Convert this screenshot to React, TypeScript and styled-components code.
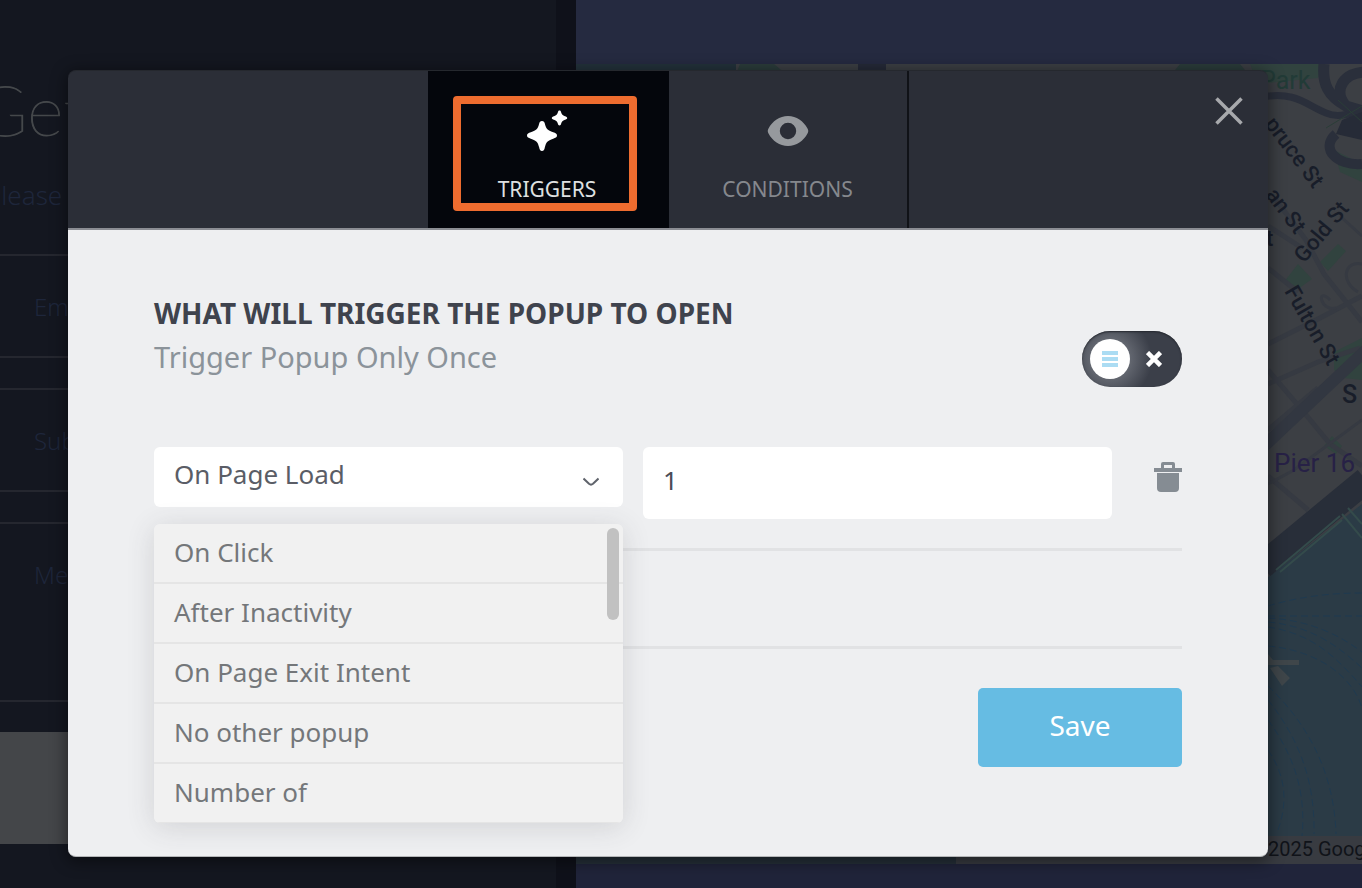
import React, { useState } from "react";
import styled, { createGlobalStyle } from "styled-components";

const uiFont = `"Noto Sans", "Open Sans", sans-serif`;

const GlobalStyle = createGlobalStyle`
  *, *::before, *::after { box-sizing: border-box; }
  body { margin: 0; background: #141720; font-family: ${uiFont}; }
  button, input, select { font-family: inherit; }
`;

const Stage = styled.div`
  position: relative;
  min-height: 100vh;
  overflow: hidden;
  display: grid;
`;

const Page = styled.div`
  grid-area: 1 / 1;
  display: grid;
  grid-template-columns: 556px 1fr;
  min-width: 0;
`;

const ContactForm = styled.form`
  padding-top: 67px;
  background: #141720;
  overflow: hidden;
`;

const FormTitle = styled.h1`
  margin: 0 0 24px -24px;
  font: 100 70px/84px "Lato", sans-serif;
  color: #45484b;
  -webkit-text-stroke: 1px #45484b;
  white-space: nowrap;
`;

const FormIntro = styled.p`
  margin: 0 0 39px -14px;
  font-size: 26px;
  line-height: 40px;
  font-weight: 300;
  color: #1e263b;
`;

const FormField = styled.input<{ $tall?: boolean }>`
  display: block;
  width: 100%;
  height: ${(p) => (p.$tall ? 180 : 104)}px;
  margin-bottom: 30px;
  padding: 0 34px ${(p) => (p.$tall ? 76 : 0)}px;
  border: solid #25272f;
  border-width: 2px 0;
  background: transparent;
  font-size: 24px;
  font-weight: 300;
  &::placeholder { color: #1e263b; opacity: 1; }
`;

const FormSubmit = styled.button`
  display: block;
  width: 100%;
  height: 112px;
  border: 0;
  background: #444649;
`;

const MapPanel = styled.section`
  border-left: 20px solid #0f111a;
  padding: 64px 0 24px;
  background: linear-gradient(#252a40 0 50%, #20243a 50%);
  min-width: 0;
`;

const MapDrawing = styled.svg`
  display: block;
  width: 100%;
  height: 800px;
`;

const Overlay = styled.div`
  grid-area: 1 / 1;
  position: relative;
  padding: 70px 94px 29px 68px;
  min-width: 0;
`;

const Dialog = styled.div`
  border-radius: 8px;
  box-shadow: 0 3px 16px 2px rgba(0, 0, 0, 0.45);
`;

const DialogHeader = styled.header`
  display: grid;
  grid-template-columns: 1fr 241px 240px 1fr;
  height: 160px;
  border-top: 1px solid #25282e;
  border-bottom: 2px solid #8b8d93;
  border-radius: 8px 8px 0 0;
  background: #2b2e37;
`;

const Tab = styled.button<{ $active?: boolean }>`
  position: relative;
  grid-column: ${(p) => (p.$active ? 2 : 3)};
  display: flex;
  flex-direction: column;
  align-items: center;
  gap: 23px;
  padding: 39px 0 0;
  border: 0;
  border-right: 2px solid ${(p) => (p.$active ? "#04060c" : "#101217")};
  background: ${(p) => (p.$active ? "#04060c" : "transparent")};
  color: ${(p) => (p.$active ? "#dfe0e1" : "#85888d")};
  font-size: 21px;
  line-height: 28px;
  svg { display: block; }
`;

const Highlight = styled.span`
  position: absolute;
  inset: 25px 30px 17px 25px;
  border: 8px solid #ee6c2f;
  border-radius: 4px;
  pointer-events: none;
`;

const HeaderEnd = styled.div`
  grid-column: 4;
  display: flex;
  justify-content: flex-end;
  align-items: flex-start;
  padding: 25px 24px 0 0;
`;

const IconButton = styled.button`
  display: grid;
  place-items: center;
  padding: 0;
  border: 0;
  background: transparent;
`;

const DialogBody = styled.div`
  padding: 65px 86px 89px;
  border-bottom: 1px solid #b4b6b8;
  border-radius: 0 0 8px 8px;
  background: #eeeff1;
`;

const Title = styled.h2`
  margin: 0;
  font-size: 28px;
  line-height: 36px;
  font-weight: 700;
  color: #3f434d;
`;

const OnceRow = styled.label`
  display: flex;
  justify-content: space-between;
  align-items: center;
  height: 56px;
  margin-bottom: 60px;
  font-size: 29px;
  line-height: 40px;
  color: #8b939a;
`;

const OnceText = styled.span`
  padding-bottom: 4px;
`;

const Switch = styled.span`
  position: relative;
  display: flex;
  align-items: center;
  justify-content: space-between;
  width: 100px;
  height: 56px;
  padding: 0 20px 0 8px;
  border-radius: 28px;
  background: radial-gradient(circle at 28px 28px, #666a73 0 18px, #3b3f49 42px);
  box-shadow: inset 0 1px 2px #24272e;
`;

const SwitchInput = styled.input`
  position: absolute;
  inset: 0;
  width: 100%;
  height: 100%;
  margin: 0;
  opacity: 0;
`;

const Knob = styled.span`
  display: flex;
  flex-direction: column;
  align-items: center;
  justify-content: center;
  gap: 2px;
  width: 40px;
  height: 40px;
  border-radius: 50%;
  background: #fff;
`;

const KnobLine = styled.i`
  width: 16px;
  height: 4px;
  background: #abdcf3;
`;

const TriggerRow = styled.div`
  display: grid;
  grid-template-columns: 1fr 1fr 50px;
  column-gap: 20px;
  align-items: start;
  padding-bottom: 29px;
  border-bottom: 3px solid #e1e2e4;
`;

const SelectBox = styled.div`
  position: relative;
  svg {
    position: absolute;
    right: 24px;
    top: 30px;
    pointer-events: none;
  }
`;

const Select = styled.select`
  display: block;
  width: 100%;
  height: 60px;
  padding: 0 48px 6px 20px;
  border: 0;
  border-radius: 6px;
  appearance: none;
  background: #fff;
  color: #5a5d66;
  font-size: 26px;
`;

const Options = styled.ul`
  position: absolute;
  z-index: 1;
  top: 77px;
  left: 0;
  right: 0;
  height: 299px;
  margin: 0;
  padding: 0;
  overflow: hidden;
  list-style: none;
  border-radius: 6px;
  background: #f1f1f1;
`;

const OptionsShadow = styled.div`
  position: absolute;
  top: 77px;
  left: 0;
  right: 0;
  height: 299px;
  border-radius: 6px;
  box-shadow: 0 4px 28px rgba(60, 65, 70, 0.16);
`;

const Option = styled.li`
  height: 60px;
  padding: 0 20px;
  border-bottom: 2px solid #e5e5e5;
  font-size: 26px;
  line-height: 56px;
  color: #74777a;
`;

const Thumb = styled.span`
  position: absolute;
  top: 4px;
  right: 4px;
  width: 12px;
  height: 92px;
  border-radius: 6px;
  background: #c1c1c1;
`;

const ValueInput = styled.input`
  display: block;
  width: 100%;
  min-width: 0;
  height: 72px;
  padding: 0 20px 6px;
  border: 0;
  border-radius: 6px;
  background: #fff;
  color: #4a4d57;
  font-size: 26px;
`;

const DeleteButton = styled(IconButton)`
  justify-self: end;
  margin-top: 15px;
`;

const Footer = styled.footer`
  display: flex;
  justify-content: flex-end;
  margin-top: 95px;
  padding-top: 39px;
  border-top: 3px solid #e1e2e4;
`;

const SaveButton = styled.button`
  width: 204px;
  height: 79px;
  padding: 0 0 6px;
  border: 0;
  border-radius: 5px;
  background: #66bce3;
  color: #fff;
  font-size: 28px;
`;

function StreetMap() {
  return (
    <MapDrawing viewBox="576 64 786 800" preserveAspectRatio="xMaxYMin slice" role="img" aria-label="Map">
      <rect x="576" y="64" width="786" height="800" fill="#3c3f44" />
      <path d="M576 64h160v20H576z" fill="#23323b" />
      <path d="M740 64h34l12 10h-50zM1180 64h60l10 12h-80z" fill="#2b3c3b" />
      <path d="M858 64h28v8h-28z" fill="#252a38" />
      <path d="M576 852h380v12H576z" fill="#253039" />
      <g fill="#31433f">
        <path d="M1250 64h72l-4 14-60 6zM1284 282l14-18 14 15-14 10zM1320 262l18-18 8 7-18 20zM1334 352l28-14v42l-18-2-10-8zM1324 446l8-10 10 10-6 8zM1334 150l28 14v18l-22-10z" />
      </g>
      <g fill="none" stroke="#363a42" strokeWidth="5">
        <path d="M1268 226l34 22M1268 344l52-26 42-22M1268 384l50-22 42-14M1268 370l34 40 28 34 32 22M1276 200l30 40 18 34 38 48M1268 476l40 34M1268 430l50-42M1268 268l30 24" />
        <path d="M1268 484l26-14 68-50M1340 216l22 20M1330 300c-14-14-10 12 6 8M1362 264c-18-4-22 18-4 28" strokeWidth="3" />
      </g>
      <path d="M1262 448l70-66 34-32" stroke="#323741" strokeWidth="12" fill="none" />
      <g fill="none" stroke="#2a2f3b">
        <path d="M1262 97c34-6 44 8 64 16 14 6 26 0 40-6" strokeWidth="7" />
        <path d="M1324 64c-2 20 4 32 22 42l20 6M1346 106c-14-16-2-34 20-34" strokeWidth="11" />
        <path d="M1336 134c-16 14 0 32 26 30" strokeWidth="10" />
      </g>
      <path d="M1342 120l20-8v28l-26-6z" fill="#262b37" />
      <path d="M1326 128l36-22M1338 100l24 22" stroke="#2b3e38" fill="none" />
      <path d="M1262 582l100-78v360h-100z" fill="#2b3b46" />
      <path d="M1262 566l104-86" stroke="#282e39" strokeWidth="26" fill="none" />
      <path d="M1276 570l64-54M1280 572l62-52M1342 514l20 24M1348 508l14 16" stroke="#344b4b" strokeWidth="2" fill="none" />
      <path d="M1268 671v-6h31v-5h-26l-5-6zM1270 668l12 18 8-8-12-12" fill="#3f464a" />
      <g fill="none" stroke="#1f3a50" strokeDasharray="7 4" strokeWidth="1">
        <path d="M1268 606c30-9 60-13 94-13M1268 616h94M1268 618c40 2 70 16 94 34M1268 622c45 4 72 26 94 46M1268 627c38 6 62 22 94 60M1268 646c46 4 84 28 94 62M1268 686c36 34 66 82 68 148M1268 700c32 40 47 82 46 134M1268 720c28 38 38 76 34 116M1268 750c18 26 20 52 10 80" />
      </g>
      <g fill="#181d29" fontFamily="Roboto, sans-serif" fontSize="22" fontWeight="500">
        <text x="1260" y="89" fontSize="25" fontWeight="400" fill="#223b37">Park</text>
        <text transform="translate(1264 124) rotate(53)">pruce St</text>
        <text transform="translate(1265 195) rotate(53)">an St</text>
        <text transform="translate(1304 264) rotate(-50)">Gold St</text>
        <text transform="translate(1284 291) rotate(60)">Fulton St</text>
        <text x="1266" y="246">t</text>
        <text x="1342" y="403" fontSize="25">S</text>
        <text x="1274" y="472" fontSize="26" fontWeight="400" fill="#272146">Pier 16</text>
      </g>
      <path d="M956 836h406v28H956z" fill="#383b41" />
      <text x="1268" y="856" fill="#101319" fontFamily="Roboto, sans-serif" fontSize="20">2025 Google</text>
    </MapDrawing>
  );
}

const SparkleIcon = () => (
  <svg width="42" height="42" viewBox="0 0 42 42" fill="#fff" aria-hidden="true">
    <path d="M16 11c1.800 0 2.400 1 2.800 2.500 1.500 5.600 2.600 6.800 8.400 8.800 2.300.8 3.800 1.400 3.800 3.200s-1.500 2.400-3.800 3.200c-5.800 2-6.900 3.200-8.400 8.800C18.400 39.500 17.800 41 16 41s-2.400-1.500-2.800-3.500c-1.500-5.600-2.600-6.800-8.400-8.800C2.500 27.900 1 27.300 1 25.500s1.500-2.400 3.800-3.200c5.800-2 6.900-3.200 8.400-8.800.4-1.500 1-2.500 2.800-2.500z" />
    <path d="M33.500.500c1 0 1.300.7 1.600 1.700.8 2.500 1.400 3.100 3.900 4 1.300.5 2.200.8 2.200 1.800s-.9 1.300-2.200 1.800c-2.500.9-3.100 1.500-3.900 4-.3 1-.6 1.700-1.600 1.700s-1.300-.7-1.600-1.700c-.8-2.500-1.400-3.100-3.900-4-1.300-.5-2.200-.8-2.200-1.800s.9-1.300 2.200-1.800c2.500-.9 3.100-1.500 3.900-4 .3-1 .6-1.700 1.600-1.700z" />
  </svg>
);

const EyeIcon = () => (
  <svg width="42" height="42" viewBox="0 0 42 42" fill="#96999d" aria-hidden="true">
    <path fillRule="evenodd" d="M21 6c8.500 0 15.500 5 19.500 12.500 1 2 1 3 0 5C36.500 31 29.500 36 21 36S5.500 31 1.500 23.500c-1-2-1-3 0-5C5.500 11 12.500 6 21 6zm0 6.800a8.200 8.200 0 1 0 0 16.400 8.200 8.200 0 0 0 0-16.400z" />
  </svg>
);

const CloseIcon = () => (
  <svg width="30" height="30" viewBox="0 0 30 30" stroke="#a7a9ac" strokeWidth="3.500" aria-hidden="true">
    <path d="M2.500 2.500l25 25M27.500 2.500l-25 25" />
  </svg>
);

const TrashIcon = () => (
  <svg width="28" height="30" viewBox="0 0 28 30" fill="#858c93" aria-hidden="true">
    <path fillRule="evenodd" d="M0 6h7V2q0-2 2-2h10q2 0 2 2v4h7v4H0zM10 3v3h8V3z" />
    <path d="M3 11h22v15q0 4-4 4H7q-4 0-4-4z" />
  </svg>
);

const options = ["On Click", "After Inactivity", "On Page Exit Intent", "No other popup", "Number of"];

export default function App() {
  const [once, setOnce] = useState(false);
  const [delay, setDelay] = useState("1");
  return (
    <>
      <GlobalStyle />
      <Stage>
        <Page>
          <ContactForm>
            <FormTitle>Get</FormTitle>
            <FormIntro>Please</FormIntro>
            <FormField aria-label="Email" placeholder="Email" />
            <FormField aria-label="Subject" placeholder="Subject" />
            <FormField aria-label="Message" placeholder="Message" $tall />
            <FormSubmit type="button" aria-label="Send" />
          </ContactForm>
          <MapPanel>
            <StreetMap />
          </MapPanel>
        </Page>
        <Overlay>
          <Dialog role="dialog" aria-labelledby="dialog-title">
            <DialogHeader>
              <Tab type="button" $active>
                <SparkleIcon />
                TRIGGERS
                <Highlight />
              </Tab>
              <Tab type="button">
                <EyeIcon />
                CONDITIONS
              </Tab>
              <HeaderEnd>
                <IconButton type="button" aria-label="Close">
                  <CloseIcon />
                </IconButton>
              </HeaderEnd>
            </DialogHeader>
            <DialogBody>
              <Title id="dialog-title">WHAT WILL TRIGGER THE POPUP TO OPEN</Title>
              <OnceRow>
                <OnceText>Trigger Popup Only Once</OnceText>
                <Switch>
                  <Knob>
                    <KnobLine />
                    <KnobLine />
                    <KnobLine />
                  </Knob>
                  <svg width="16" height="16" viewBox="0 0 16 16" stroke="#fff" strokeWidth="4.500" aria-hidden="true">
                    <path d="M1.500 1.500l13 13M14.500 1.500l-13 13" />
                  </svg>
                  <SwitchInput type="checkbox" checked={once} onChange={(e) => setOnce(e.target.checked)} />
                </Switch>
              </OnceRow>
              <TriggerRow>
                <SelectBox>
                  <Select aria-label="Trigger" defaultValue="On Page Load">
                    <option>On Page Load</option>
                  </Select>
                  <svg width="16" height="10" viewBox="0 0 16 10" fill="none" stroke="#5f636b" strokeWidth="2" aria-hidden="true">
                    <path d="M.500 1.500L6 6.800q2 1.600 4 0l5.500-5.300" />
                  </svg>
                  <OptionsShadow />
                  <Options role="listbox" aria-label="Trigger options">
                    {options.map((o) => (
                      <Option key={o} role="option">
                        {o}
                      </Option>
                    ))}
                    <Thumb />
                  </Options>
                </SelectBox>
                <ValueInput aria-label="Delay" value={delay} onChange={(e) => setDelay(e.target.value)} />
                <DeleteButton type="button" aria-label="Delete trigger">
                  <TrashIcon />
                </DeleteButton>
              </TriggerRow>
              <Footer>
                <SaveButton type="button">Save</SaveButton>
              </Footer>
            </DialogBody>
          </Dialog>
        </Overlay>
      </Stage>
    </>
  );
}
